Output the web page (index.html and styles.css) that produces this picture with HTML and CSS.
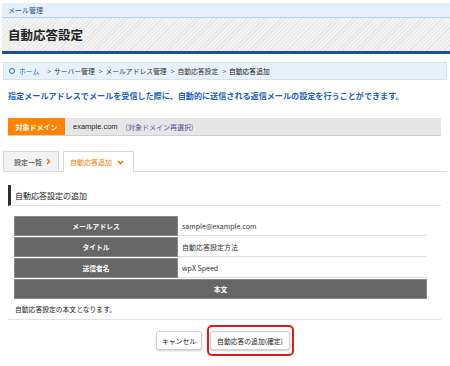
FILE: index.html
```html
<!DOCTYPE html>
<html lang="ja">
<head>
<meta charset="utf-8">
<link rel="stylesheet" href="styles.css">
</head>
<body>
<div class="page">
  <div class="topbar">メール管理</div>
  <div class="titlebar"><h1>自動応答設定</h1></div>
  <div class="crumbs">
    <span class="ring"></span><a class="home">ホーム</a>
    <span class="sep">&gt;</span>サーバー管理
    <span class="sep">&gt;</span>メールアドレス管理
    <span class="sep">&gt;</span>自動応答設定
    <span class="sep">&gt;</span><span class="cur">自動応答追加</span>
  </div>
  <p class="desc">指定メールアドレスでメールを受信した際に、自動的に送信される返信メールの設定を行うことができます。</p>
  <div class="domain">
    <span class="dlabel">対象ドメイン</span>
    <span class="dname">example.com</span>
    <span class="dlink">(対象ドメイン再選択)</span>
  </div>
  <div class="tabs">
    <div class="tab">設定一覧 <svg class="right" width="5" height="7" viewBox="0 0 5 7"><path d="M1 1 L3.5 3.5 L1 6" fill="none" stroke="#f07c00" stroke-width="1.6"/></svg></div>
    <div class="tab active">自動応答追加 <svg class="down" width="7" height="5" viewBox="0 0 7 5"><path d="M1 1 L3.5 3.5 L6 1" fill="none" stroke="#f07c00" stroke-width="1.6"/></svg></div>
  </div>
  <div class="section">自動応答設定の追加</div>
  <div class="form">
    <div class="row"><div class="th">メールアドレス</div><div class="td">sample@example.com</div></div>
    <div class="row"><div class="th">タイトル</div><div class="td">自動応答設定方法</div></div>
    <div class="row"><div class="th">送信者名</div><div class="td">wpX Speed</div></div>
    <div class="row"><div class="th full">本文</div></div>
  </div>
  <div class="bodytext">自動応答設定の本文となります。</div>
  <div class="actions">
    <button class="btn cancel">キャンセル</button>
    <div class="highlight"><button class="btn confirm">自動応答の追加(確定)</button></div>
  </div>
</div>
</body>
</html>
```
FILE: styles.css
```css
html, body {
  margin: 0;
  padding: 0;
  background: #fff;
}
body {
  font-family: "Noto Sans CJK JP", "Liberation Sans", sans-serif;
  color: #222;
}
.page {
  width: 450px;
  padding-top: 3px;
}
.topbar {
  height: 14px;
  line-height: 14px;
  background: #e4effb;
  border-bottom: 1px solid #b9d0ea;
  padding-left: 6px;
  font-size: 7px;
  color: #1f4f8a;
  margin-left: 2px;
}
.titlebar {
  height: 33px;
  margin-left: 2px;
  background: repeating-linear-gradient(135deg, #f3f3f3 0px, #f3f3f3 2px, #e6e6e6 2px, #e6e6e6 3px);
  border-bottom: 3px solid #1d4f9e;
  display: flex;
  align-items: center;
  padding-left: 6px;
}
.titlebar h1 {
  margin: 0;
  font-size: 12.5px;
  font-weight: bold;
  color: #222;
}
.crumbs {
  margin: 8px 3px 0 3px;
  height: 18px;
  background: #e7f1fc;
  border: 1px solid #d3e3f3;
  box-sizing: border-box;
  display: flex;
  align-items: center;
  padding-left: 5px;
  font-size: 6.8px;
  color: #333;
  white-space: nowrap;
}
.ring {
  width: 4px;
  height: 4px;
  border: 1px solid #2e68b8;
  border-radius: 50%;
  margin-right: 4px;
}
.home {
  color: #1e63c0;
  margin-right: 4px;
}
.sep {
  margin: 0 3px 0 4px;
  color: #444;
}
.cur {
  color: #111;
}
.desc {
  margin: 10px 0 0 8px;
  font-size: 8.1px;
  font-weight: bold;
  color: #1a62b8;
  line-height: 12px;
  white-space: nowrap;
}
.domain {
  margin: 16px 9px 0 8px;
  height: 17px;
  background: #e6e6e6;
  border-bottom: 1px solid #cfcfcf;
  display: flex;
  align-items: center;
  font-size: 7px;
}
.dlabel {
  background: #ff8400;
  color: #fff;
  font-weight: bold;
  height: 100%;
  width: 57px;
  display: flex;
  align-items: center;
  justify-content: center;
}
.dname {
  margin-left: 8px;
  font-family: "Liberation Sans", sans-serif;
  font-size: 7.5px;
  color: #222;
}
.dlink {
  margin-left: 8px;
  color: #5a4fa8;
}
.tabs {
  margin: 15px 3px 0 3px;
  display: flex;
  gap: 4px;
  border-bottom: 1px solid #dcdcdc;
  height: 20px;
}
.tab {
  height: 20px;
  box-sizing: border-box;
  border: 1px solid #d8d8d8;
  border-bottom: none;
  background: #f2f2f2;
  font-size: 7px;
  color: #333;
  display: flex;
  align-items: center;
  padding: 0 7px 0 10px;
  gap: 4px;
}
.tab.active {
  background: #fff;
  height: 21px;
  color: #f07c00;
  padding: 0 9px 0 6px;
  gap: 5px;
}
.section {
  margin: 13px 9px 0 8px;
  height: 20px;
  border-left: 3px solid #2d2d2d;
  border-bottom: 1px solid #e2e2e2;
  padding-left: 4px;
  display: flex;
  align-items: center;
  font-size: 8px;
  color: #222;
}
.form {
  margin: 10px 23px 0 14px;
  display: flex;
  flex-direction: column;
  gap: 1px;
}
.row {
  display: flex;
  height: 20px;
}
.th {
  width: 164px;
  box-sizing: border-box;
  background: #666;
  border: 1px solid #8a8a8a;
  color: #fff;
  font-weight: bold;
  font-size: 6.8px;
  display: flex;
  align-items: center;
  justify-content: center;
}
.th.full {
  width: 100%;
}
.td {
  flex: 1;
  border-bottom: 1px solid #dedede;
  display: flex;
  align-items: center;
  padding-left: 4px;
  font-size: 7px;
  color: #333;
}
.bodytext {
  margin: 5px 9px 0 8px;
  padding: 0 0 5px 7px;
  font-size: 6.8px;
  color: #222;
  border-bottom: 1px solid #e2e2e2;
  line-height: 10px;
}
.actions {
  display: flex;
  align-items: center;
  margin-top: 5px;
  padding-left: 156px;
  gap: 5px;
}
.btn {
  font-family: "Noto Sans CJK JP", sans-serif;
  font-size: 6.8px;
  color: #222;
  background: #fff;
  border: 1px solid #cfcfcf;
  border-radius: 3px;
  box-shadow: 0 1px 2px rgba(0,0,0,0.2);
  height: 19px;
  padding: 0;
  margin: 0;
}
.cancel {
  width: 46px;
}
.highlight {
  border: 2px solid #e8141c;
  border-radius: 5px;
  padding: 4px 2px 4px 1px;
  display: flex;
}
.confirm {
  width: 80px;
}
```
